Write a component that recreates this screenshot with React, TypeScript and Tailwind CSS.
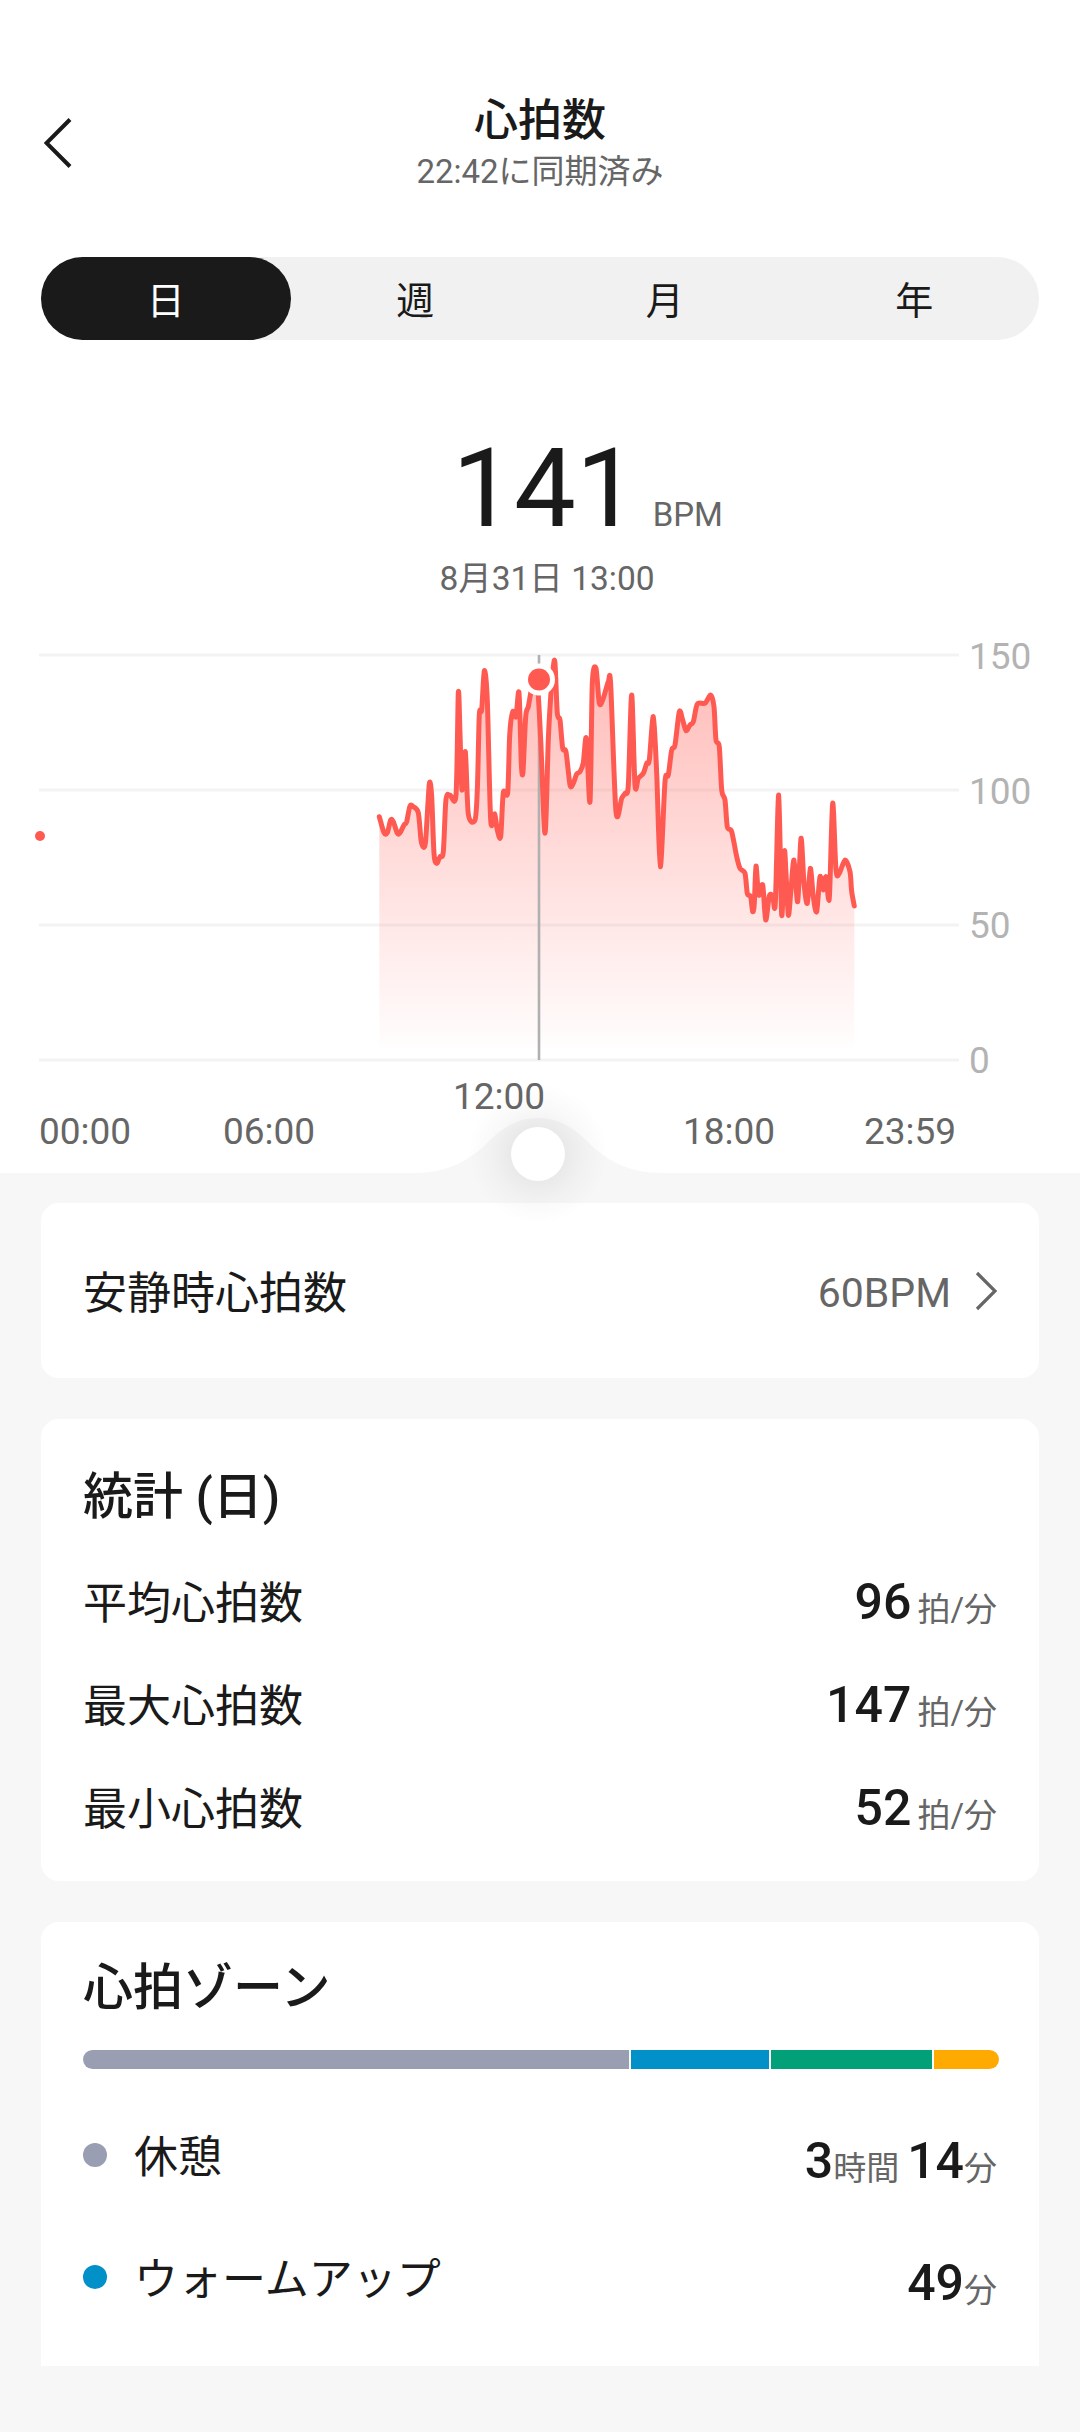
import React from "react";

const z2: number[][] = [
  [58,530],[72,578],[82,578],[92,540],[100,545],[112,580],[120,578],[132,555],[140,545],[150,498],[160,500],[175,518],[183,600],[190,622],[197,600],[208,432],[215,470],[222,640],[230,670],[240,650],[250,635],[258,478],[270,465],[288,465],[295,158],[300,280],[306,450],[316,335],[325,522],[345,540],[352,450],[358,225],[365,210],[373,92],[382,180],[392,540],[404,522],[412,570],[422,590],[430,458],[443,458],[449,285],[458,215],[468,230],[477,158],[484,370],[489,395],[497,230],[505,200],[512,160],[520,125],[532,130],[542,300],[555,580],[565,300],[572,170],[580,80],[585,70],[592,220],[600,240],[608,325],[618,335],[630,435],[640,430],[650,402],[660,395],[670,368],[679,295],[690,485],[697,130],[708,85],[718,190],[730,175],[745,125],[752,135],[768,515],[785,475],[795,460],[805,435],[815,165],[825,435],[835,415],[850,400],[860,370],[868,360],[880,230],[890,400],[901,680],[915,425],[925,405],[935,330],[945,315],[958,215],[968,240],[978,272],[990,255],[1000,245],[1012,192],[1035,190],[1052,165],[1062,200],
];
const z3: number[][] = [
  [288,300],[298,320],[305,450],[315,480],[322,560],[335,575],[350,650],[360,685],[375,700],[382,760],[392,770],[398,815],[403,790],[408,678],[416,765],[428,735],[437,840],[448,768],[458,768],[466,790],[476,465],[485,825],[493,635],[498,700],[505,825],[512,760],[522,660],[533,785],[543,595],[552,730],[562,790],[571,685],[580,770],[590,815],[600,710],[610,750],[618,710],[628,775],[638,490],[648,690],[658,700],[675,660],[690,695],[695,755],[703,798],
];
const pts: number[][] = [
  ...z2.map(([x, y]) => [360 + x / 3, y / 3]),
  ...z3.map(([x, y]) => [620 + x / 3, y / 3]),
];

function smooth(p: number[][]) {
  let d = `M${p[0][0].toFixed(1)} ${p[0][1].toFixed(1)}`;
  for (let i = 0; i < p.length - 1; i++) {
    const a = p[Math.max(i - 1, 0)];
    const b = p[i];
    const c = p[i + 1];
    const e = p[Math.min(i + 2, p.length - 1)];
    const k = 7;
    d += `C${(b[0] + (c[0] - a[0]) / k).toFixed(1)} ${(b[1] + (c[1] - a[1]) / k).toFixed(1)} ${(c[0] - (e[0] - b[0]) / k).toFixed(1)} ${(c[1] - (e[1] - b[1]) / k).toFixed(1)} ${c[0].toFixed(1)} ${c[1].toFixed(1)}`;
  }
  return d;
}

const linePath = smooth(pts);
const first = pts[0];
const last = pts[pts.length - 1];
const areaPath = `${linePath}L${last[0].toFixed(1)} 408L${first[0].toFixed(1)} 408Z`;

function Chart() {
  return (
    <svg width="1080" height="440" viewBox="0 0 1080 440" className="block">
      <defs>
        <linearGradient id="area" gradientUnits="userSpaceOnUse" x1="0" y1="15" x2="0" y2="408">
          <stop offset="0" stopColor="#ff5a52" stopOpacity="0.42" />
          <stop offset="1" stopColor="#ff5a52" stopOpacity="0.01" />
        </linearGradient>
      </defs>
      {[15, 150, 285, 420].map((y) => (
        <rect key={y} x="39" y={y - 1.5} width="920" height="3" fill="#f3f3f3" />
      ))}
      <path d={areaPath} fill="url(#area)" />
      <rect x="537.7" y="15" width="2.6" height="405" fill="#b0b0b0" />
      <path d={linePath} fill="none" stroke="#ff5a52" strokeWidth="5" strokeLinejoin="round" strokeLinecap="round" />
      <circle cx="40" cy="196" r="5" fill="#ff5a52" />
      <circle cx="539" cy="39.5" r="16" fill="#ffffff" />
      <circle cx="539" cy="39.5" r="11" fill="#ff5a52" />
    </svg>
  );
}

function Slider() {
  return (
    <svg width="320" height="110" viewBox="0 0 320 110" className="absolute left-[378px] top-[1098px] overflow-visible">
      <defs>
        <radialGradient id="glow" gradientUnits="userSpaceOnUse" cx="160" cy="56" r="70">
          <stop offset="0.35" stopColor="#000000" stopOpacity="0.06" />
          <stop offset="0.65" stopColor="#000000" stopOpacity="0.025" />
          <stop offset="1" stopColor="#000000" stopOpacity="0" />
        </radialGradient>
      </defs>
      <path d="M36 75C70 75 92 62 109 45C125 29 140 20 160 20C180 20 195 29 211 45C228 62 250 75 284 75Z" fill="#f7f7f7" />
      <circle cx="160" cy="56" r="70" fill="url(#glow)" />
      <circle cx="160" cy="56" r="27" fill="#ffffff" />
    </svg>
  );
}

function Unit({ children }: { children: React.ReactNode }) {
  return <span className="text-[33px] text-[#666666] align-[-2px]">{children}</span>;
}

function Num({ children }: { children: React.ReactNode }) {
  return <span className="text-[50px] font-medium text-[#1a1a1a]">{children}</span>;
}

function StatRow({ label, value }: { label: string; value: string }) {
  return (
    <div className="flex h-[103px] items-center justify-between">
      <span className="mt-[6px] text-[44px] leading-[60px]">{label}</span>
      <span className="mt-[14px] leading-[60px] whitespace-nowrap">
        <Num>{value}</Num>
        <span className="ml-[6px]">
          <Unit>拍/分</Unit>
        </span>
      </span>
    </div>
  );
}

function ZoneRow({ color, label, children }: { color: string; label: string; children: React.ReactNode }) {
  return (
    <div className="flex h-[122px] items-center justify-between">
      <div className="flex items-center">
        <span className={`h-[24px] w-[24px] rounded-full ${color}`} />
        <span className="ml-[27px] mt-[6px] text-[44px] leading-[60px]">{label}</span>
      </div>
      <span className="mt-[24px] leading-[60px] whitespace-nowrap">{children}</span>
    </div>
  );
}

export default function App() {
  return (
    <div className="relative h-[2432px] w-[1080px] overflow-hidden bg-[#f7f7f7] font-['Roboto','Noto_Sans_CJK_JP',sans-serif] text-[#1a1a1a]">
      <section className="h-[1173px] bg-white">
        <header className="grid grid-cols-[1fr_auto_1fr] pt-[93px]">
          <div className="pl-[44px] pt-[25px]">
            <svg width="30" height="50" viewBox="0 0 30 50" fill="none">
              <path d="M26 1.5L2.5 25L26 48.5" stroke="#1a1a1a" strokeWidth="4" strokeLinejoin="miter" />
            </svg>
          </div>
          <div className="text-center">
            <div className="text-[44px] font-medium leading-[57px]">心拍数</div>
            <div className="text-[33px] leading-[44px] text-[#666666]">22:42に同期済み</div>
          </div>
          <div />
        </header>

        <div className="mx-[41px] mt-[63px] grid h-[83px] grid-cols-4 rounded-full bg-[#f1f1f1] text-[38px]">
          <div className="flex items-center justify-center rounded-full bg-[#1a1a1a] pt-[5px] text-white">日</div>
          <div className="flex items-center justify-center pt-[5px]">週</div>
          <div className="flex items-center justify-center pt-[5px]">月</div>
          <div className="flex items-center justify-center pt-[5px]">年</div>
        </div>

        <div className="mt-[84px] grid grid-cols-[1fr_auto_1fr] items-baseline">
          <div />
          <div className="ml-[10px] text-[110px] leading-[130px]">141</div>
          <div className="ml-[15px] text-[33px] text-[#666666]">BPM</div>
        </div>
        <div className="mt-[3px] pl-[14px] text-center text-[33.5px] leading-[44px] text-[#666666]">8月31日 13:00</div>

        <div className="relative mt-[39px] h-[440px]">
          <Chart />
          <div className="absolute left-[969px] top-[-5px] flex h-[448px] flex-col justify-between text-[37px] leading-[44px] text-[#b3b3b3]">
            <span>150</span>
            <span>100</span>
            <span>50</span>
            <span>0</span>
          </div>
        </div>

        <div className="ml-[39px] mt-[30px] grid grid-cols-[184px_230px_230px_181px_auto] text-[37px] leading-[44px] text-[#666666]">
          <span>00:00</span>
          <span>06:00</span>
          <span className="-translate-y-[35px]">12:00</span>
          <span>18:00</span>
          <span>23:59</span>
        </div>
      </section>

      <div className="mx-[41px] pt-[30px]">
        <div className="flex h-[175px] items-center justify-between rounded-[18px] bg-white px-[42px]">
          <span className="mt-[6px] text-[44px] leading-[60px]">安静時心拍数</span>
          <div className="flex items-center">
            <span className="mt-[4px] text-[41px] leading-[60px] text-[#666666]">60BPM</span>
            <svg width="22" height="40" viewBox="0 0 22 40" fill="none" className="ml-[24px]">
              <path d="M2 2L20 20L2 38" stroke="#666666" strokeWidth="3.2" />
            </svg>
          </div>
        </div>

        <div className="mt-[41px] h-[462px] rounded-[18px] bg-white px-[42px] pt-[48px]">
          <div className="text-[50px] font-medium leading-[60px]">統計 (日)</div>
          <div className="mt-[22px]">
            <StatRow label="平均心拍数" value="96" />
            <StatRow label="最大心拍数" value="147" />
            <StatRow label="最小心拍数" value="52" />
          </div>
        </div>

        <div className="mt-[41px] h-[444px] rounded-t-[18px] bg-white px-[42px] pt-[36px]">
          <div className="text-[50px] font-medium leading-[60px]">心拍ゾーン</div>
          <div className="mt-[32px] flex h-[19px] w-[916px] gap-[2px] overflow-hidden rounded-full">
            <div className="w-[546px] bg-[#9a9eb3]" />
            <div className="w-[138px] bg-[#0290c8]" />
            <div className="w-[161px] bg-[#02a078]" />
            <div className="w-[65px] bg-[#ffaa00]" />
          </div>
          <div className="mt-[25px]">
            <ZoneRow color="bg-[#9a9eb3]" label="休憩">
              <Num>3</Num>
              <Unit>時間</Unit>
              <span className="ml-[8px]"><Num>14</Num></span>
              <Unit>分</Unit>
            </ZoneRow>
            <ZoneRow color="bg-[#0290c8]" label="ウォームアップ">
              <Num>49</Num>
              <Unit>分</Unit>
            </ZoneRow>
          </div>
        </div>
      </div>

      <Slider />
    </div>
  );
}
